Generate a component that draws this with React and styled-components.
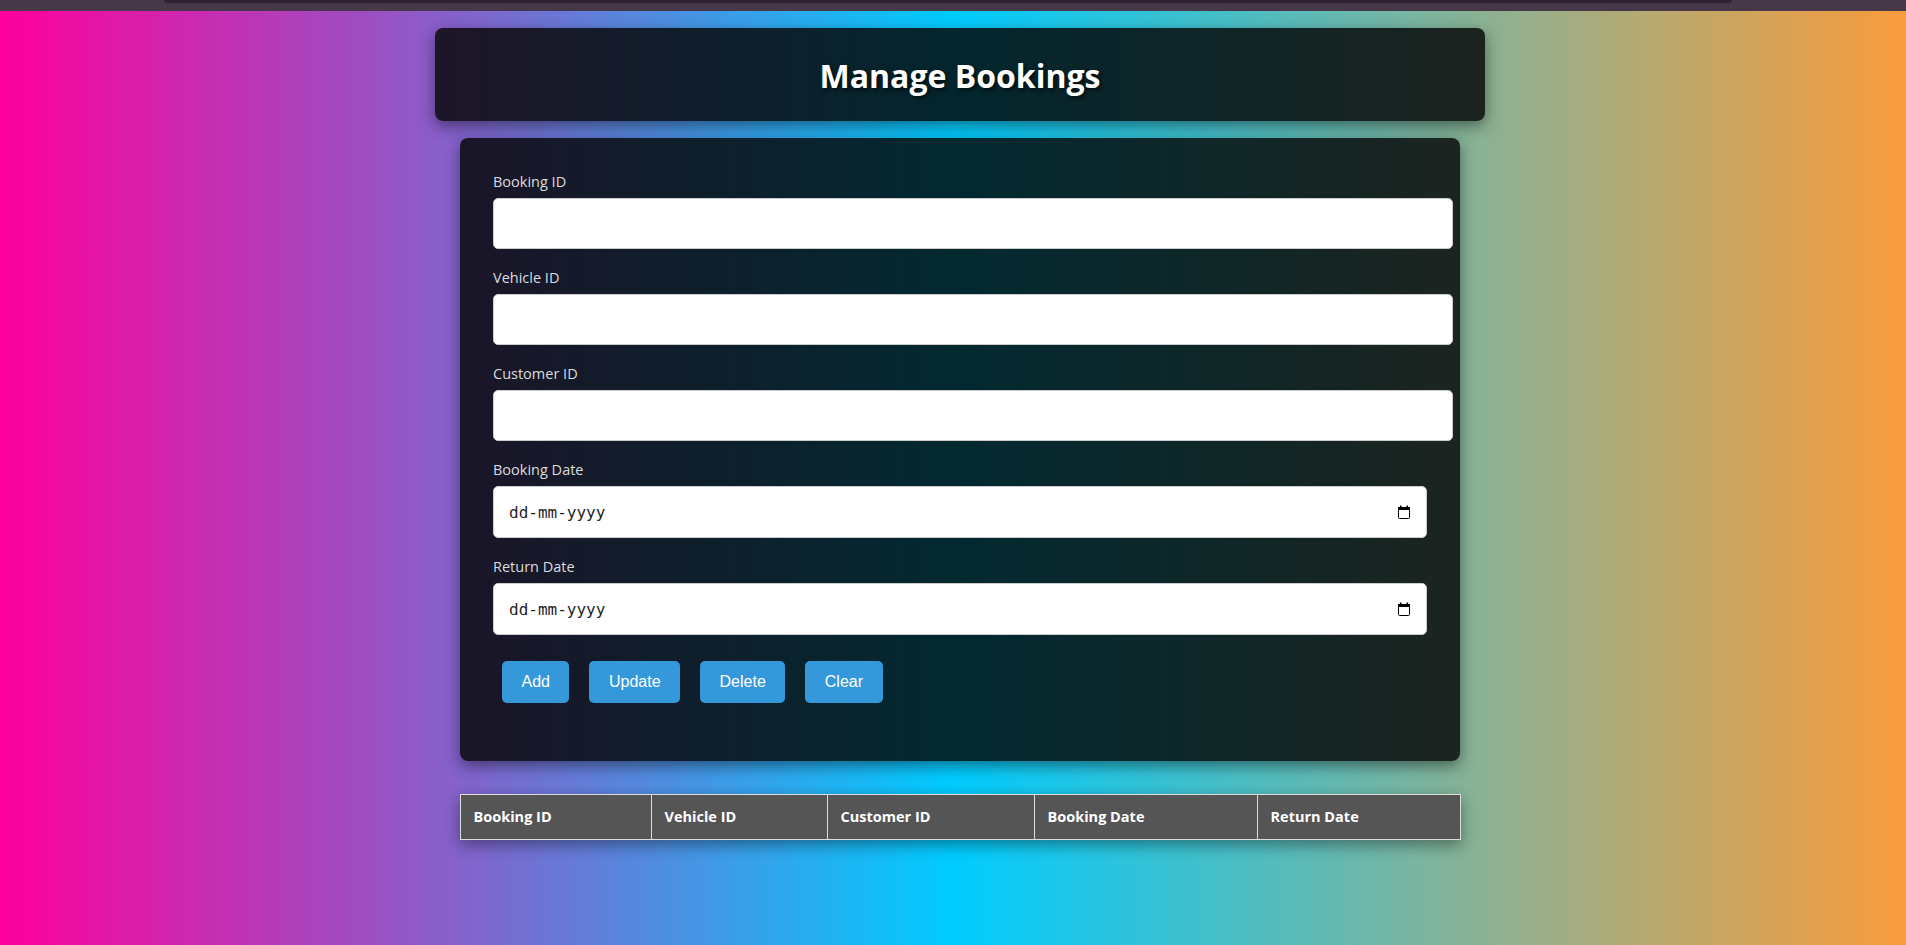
import React from "react";
import styled, { createGlobalStyle } from "styled-components";

const GlobalStyle = createGlobalStyle`
  body {
    margin: 0;
    font-family: "Open Sans", "Noto Sans", sans-serif;
    overflow-x: hidden;
  }
`;

const TopStrip = styled.div`
  height: 11px;
  background-color: #463848;
`;

const TopStripBar = styled.div`
  margin-left: 164px;
  width: 1568px;
  height: 3px;
  background-color: #2d2231;
  border-radius: 0 0 4px 4px;
`;

const Page = styled.div`
  min-height: calc(100vh - 11px);
  box-sizing: border-box;
  padding: 17px 0 40px 14px;
  background: linear-gradient(to right, #ff009c 0%, #00ccff 50%, #fa9c3c 100%);
`;

const Header = styled.header`
  width: 1050px;
  height: 93px;
  margin: 0 auto;
  display: flex;
  align-items: center;
  justify-content: center;
  border-radius: 8px;
  background: linear-gradient(to right, #1d1528, #03262e 50%, #1c231f);
  box-shadow: 0 5px 15px rgba(0, 0, 0, 0.45);
`;

const Title = styled.h1`
  margin: 2px 0 0;
  font-size: 32px;
  font-weight: 700;
  color: #fff;
  text-shadow: 2px 2px 4px rgba(0, 0, 0, 0.7);
`;

const FormCard = styled.form`
  width: 1000px;
  box-sizing: border-box;
  margin: 17px auto 0;
  padding: 33px 33px 48px;
  border-radius: 8px;
  background: linear-gradient(to right, #1a1528, #022930 50%, #1c2420);
  box-shadow: 0 5px 15px rgba(0, 0, 0, 0.45);
`;

const Field = styled.div`
  margin-bottom: 18px;
`;

const Label = styled.label`
  display: block;
  font-size: 14.5px;
  line-height: 21px;
  color: #dcdcdc;
  margin-bottom: 6px;
`;

const TextInput = styled.input`
  display: block;
  box-sizing: border-box;
  width: calc(100% + 26px);
  height: 51px;
  padding: 0 12px;
  border: 1px solid #ccc;
  border-radius: 5px;
  background: #fff;
  font-size: 16px;
  outline: none;
`;

const DateBox = styled.div`
  position: relative;
`;

const DateInput = styled.input`
  display: block;
  box-sizing: border-box;
  width: 100%;
  height: 52px;
  padding: 0 40px 0 15px;
  border: 1px solid #ccc;
  border-radius: 5px;
  background: #fff;
  font-family: "DejaVu Sans Mono", monospace;
  font-size: 16px;
  color: #1a1a1a;
  outline: none;

  &::placeholder {
    color: #1f1f1f;
    opacity: 1;
  }
`;

const CalendarIcon = styled.svg`
  position: absolute;
  right: 15px;
  top: 50%;
  transform: translateY(-50%);
  width: 16px;
  height: 16px;
  pointer-events: none;
`;

const ButtonRow = styled.div`
  display: flex;
  margin-left: -1px;
`;

const Button = styled.button`
  margin: 8px 10px 10px;
  padding: 12px 19.5px;
  border: none;
  border-radius: 5px;
  background-color: #3498db;
  color: #fff;
  font-family: "Liberation Sans", Arial, sans-serif;
  font-size: 16px;
  cursor: pointer;
`;

const Table = styled.table`
  width: 1000px;
  margin: 33px auto 0;
  border-collapse: collapse;
  table-layout: fixed;
  box-shadow: 0 5px 15px rgba(0, 0, 0, 0.4);
`;

const Col = styled.col`
  width: ${(p) => p.$w}px;
`;

const Th = styled.th`
  padding: 12px 13px;
  background-color: #555;
  border: 1px solid #ddd;
  color: #fff;
  font-size: 14.5px;
  font-weight: 700;
  line-height: 20px;
  text-align: left;
`;

const textFields = ["Booking ID", "Vehicle ID", "Customer ID"];
const dateFields = ["Booking Date", "Return Date"];
const columns = [
  ["Booking ID", 191],
  ["Vehicle ID", 176],
  ["Customer ID", 207],
  ["Booking Date", 223],
  ["Return Date", 203],
];

function Calendar() {
  return (
    <CalendarIcon viewBox="0 0 16 16">
      <rect x="2.5" y="3.5" width="11" height="11" rx="1" fill="none" stroke="#000" />
      <rect x="2" y="3" width="12" height="3" fill="#000" />
      <rect x="4" y="1.5" width="1.5" height="2" fill="#000" />
      <rect x="10.5" y="1.5" width="1.5" height="2" fill="#000" />
    </CalendarIcon>
  );
}

export default function App() {
  return (
    <>
      <GlobalStyle />
      <TopStrip>
        <TopStripBar />
      </TopStrip>
      <Page>
        <Header>
          <Title>Manage Bookings</Title>
        </Header>

        <FormCard onSubmit={(e) => e.preventDefault()}>
          {textFields.map((name) => (
            <Field key={name}>
              <Label>{name}</Label>
              <TextInput type="text" />
            </Field>
          ))}
          {dateFields.map((name) => (
            <Field key={name}>
              <Label>{name}</Label>
              <DateBox>
                <DateInput type="text" placeholder="dd-mm-yyyy" />
                <Calendar />
              </DateBox>
            </Field>
          ))}
          <ButtonRow>
            <Button type="button">Add</Button>
            <Button type="button">Update</Button>
            <Button type="button">Delete</Button>
            <Button type="button">Clear</Button>
          </ButtonRow>
        </FormCard>

        <Table>
          <colgroup>
            {columns.map(([name, w]) => (
              <Col key={name} $w={w} />
            ))}
          </colgroup>
          <thead>
            <tr>
              {columns.map(([name]) => (
                <Th key={name}>{name}</Th>
              ))}
            </tr>
          </thead>
          <tbody></tbody>
        </Table>
      </Page>
    </>
  );
}
